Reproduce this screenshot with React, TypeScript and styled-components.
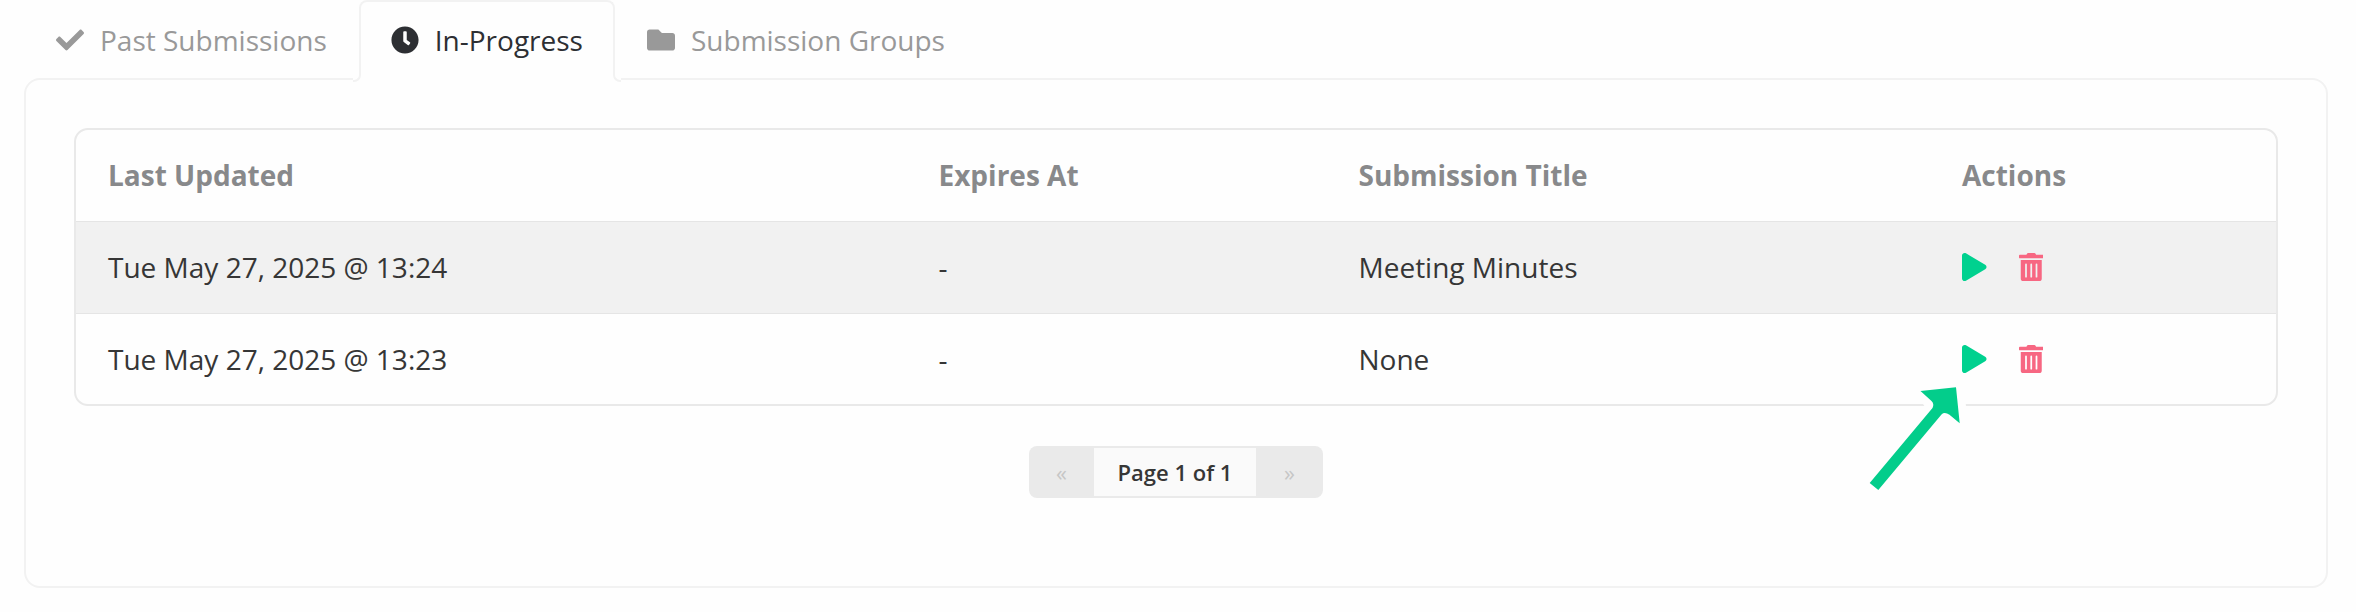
import React from "react";
import styled, { createGlobalStyle } from "styled-components";
import { FaCheck, FaClock, FaFolder, FaPlay, FaTrashAlt } from "react-icons/fa";

const GlobalStyle = createGlobalStyle`
  * { box-sizing: border-box; }
  body { margin: 0; background: #fefefe; font-family: "Open Sans", sans-serif; font-size: 28px; color: #363636; }
`;

const Page = styled.main`
  position: relative;
  width: 2356px;
  height: 612px;
  padding: 0 28px 0 24px;
  overflow: hidden;
`;

const Tabs = styled.nav`
  position: relative;
  z-index: 1;
  display: flex;
  height: 80px;
`;

const Tab = styled.div<{ $active?: boolean }>`
  position: relative;
  display: flex;
  align-items: center;
  gap: 16px;
  height: ${(p) => (p.$active ? 80 : 78)}px;
  padding: ${(p) => (p.$active ? "0 30px 2px" : "2px 32px 0")};
  color: ${(p) => (p.$active ? "#2d2f33" : "#999")};
  background: ${(p) => (p.$active ? "#fefefe" : "transparent")};
  ${(p) =>
    p.$active &&
    `border: 2px solid #f2f2f2;
     border-bottom: 0;
     border-radius: 8px 8px 0 0;`}
  svg { flex: none; }
`;

const Fillet = styled.span<{ $side: "left" | "right" }>`
  position: absolute;
  bottom: 0;
  ${(p) => p.$side}: -8px;
  width: 8px;
  height: 8px;
  background: #fefefe;
  &::after {
    content: "";
    display: block;
    height: 8px;
    border-bottom: 2px solid #f2f2f2;
    border-${(p) => (p.$side === "left" ? "right" : "left")}: 2px solid #f2f2f2;
    border-bottom-${(p) => (p.$side === "left" ? "right" : "left")}-radius: 7px;
  }
`;

const Panel = styled.section`
  display: flex;
  flex-direction: column;
  align-items: center;
  height: 510px;
  margin-top: -2px;
  padding: 48px;
  border: 2px solid #f2f2f2;
  border-radius: 16px;
`;

const Table = styled.div`
  width: 100%;
  border: 2px solid #e9e9e9;
  border-radius: 14px;
  overflow: hidden;
`;

const Row = styled.div<{ $head?: boolean; $shaded?: boolean }>`
  display: grid;
  grid-template-columns: 830.5px 420px 603.5px 1fr;
  align-items: center;
  height: ${(p) => (p.$head ? 91 : 91.5)}px;
  padding: 0 32px ${(p) => (p.$head ? 1 : 0)}px;
  background: ${(p) => (p.$shaded ? "#f1f1f1" : "transparent")};
  color: ${(p) => (p.$head ? "#88898b" : "#363636")};
  font-weight: ${(p) => (p.$head ? 700 : 400)};
  & + & { border-top: 1px solid #e5e5e5; }
`;

const Actions = styled.div`
  display: flex;
  gap: 32px;
  svg { width: 24.5px; height: 28px; }
`;

const Pager = styled.div`
  display: flex;
  width: 294px;
  height: 52px;
  margin-top: 40px;
  padding: 2px 0;
  border-radius: 8px;
  background: #eaeaea;
  font-size: 22px;
  line-height: 48px;
  text-align: center;
`;

const PagerArrow = styled.span`
  width: 65px;
  color: #c6c6c6;
  &:last-child { width: 67px; }
`;

const PagerLabel = styled.span`
  width: 162px;
  background: #fafafa;
  font-weight: 600;
`;

const Pointer = styled.svg`
  position: absolute;
  z-index: 2;
  left: 1840px;
  top: 370px;
`;

const rows = [
  { updated: "Tue May 27, 2025 @ 13:24", expires: "-", title: "Meeting Minutes" },
  { updated: "Tue May 27, 2025 @ 13:23", expires: "-", title: "None" },
];

export default function App() {
  return (
    <>
      <GlobalStyle />
      <Page>
        <Tabs>
          <Tab><FaCheck size={28} /><span>Past Submissions</span></Tab>
          <Tab $active>
            <Fillet $side="left" />
            <FaClock size={28} />
            <span>In-Progress</span>
            <Fillet $side="right" />
          </Tab>
          <Tab><FaFolder size={28} /><span>Submission Groups</span></Tab>
        </Tabs>
        <Panel>
          <Table>
            <Row $head>
              <span>Last Updated</span>
              <span>Expires At</span>
              <span>Submission Title</span>
              <span>Actions</span>
            </Row>
            {rows.map((row, i) => (
              <Row key={row.updated} $shaded={i % 2 === 0}>
                <span>{row.updated}</span>
                <span>{row.expires}</span>
                <span>{row.title}</span>
                <Actions>
                  <FaPlay color="#00d18f" />
                  <FaTrashAlt color="#f76782" />
                </Actions>
              </Row>
            ))}
          </Table>
          <Pager>
            <PagerArrow>«</PagerArrow>
            <PagerLabel>Page 1 of 1</PagerLabel>
            <PagerArrow>»</PagerArrow>
          </Pager>
        </Panel>
        <Pointer width="140" height="130" viewBox="0 0 140 130">
          <path
            d="M116 17.3 L119.7 53.3 L109.5 44.7 Q104.5 41.5 101.5 44.5 L38.3 120 L29.7 113 L92.5 38 Q94.5 34 91.5 31 L80.5 21 Z"
            fill="#03cd8b"
            stroke="#fefefe"
            strokeWidth="16"
            strokeLinejoin="round"
            paintOrder="stroke"
          />
        </Pointer>
      </Page>
    </>
  );
}
